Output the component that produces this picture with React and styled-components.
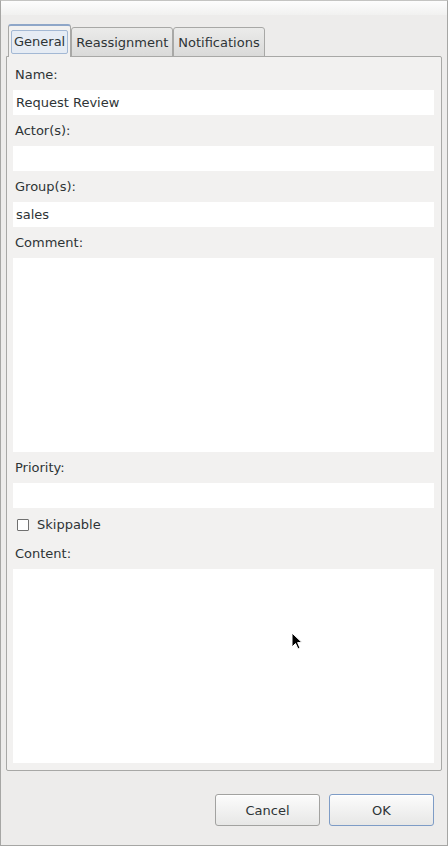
import React from 'react';
import styled, { createGlobalStyle } from 'styled-components';

const GlobalStyle = createGlobalStyle`
  html, body {
    margin: 0;
    padding: 0;
    background: #edeceb;
  }
  body {
    font-family: "DejaVu Sans", "Liberation Sans", sans-serif;
    font-size: 13px;
    color: #2e3436;
  }
  * {
    box-sizing: border-box;
  }
`;

export default function App() {
  return (
    <>
      <GlobalStyle />
      <Window>
        <TopStrip />
        <TabArea>
          <TabBar>
            <Tab selected>
              <Focus>General</Focus>
            </Tab>
            <Tab>Reassignment</Tab>
            <Tab>Notifications</Tab>
          </TabBar>
          <Panel>
            <Label>Name:</Label>
            <Field>Request Review</Field>
            <Label>Actor(s):</Label>
            <Field />
            <Label>Group(s):</Label>
            <Field>sales</Field>
            <Label>Comment:</Label>
            <TextArea />
            <Label>Priority:</Label>
            <Field />
            <CheckRow>
              <Box />
              Skippable
            </CheckRow>
            <Label short>Content:</Label>
            <TextArea />
          </Panel>
        </TabArea>
        <Footer>
          <Button>Cancel</Button>
          <Button primary>OK</Button>
        </Footer>
        <Pointer width="14" height="20" viewBox="0 0 14 20">
          <path
            d="M1 1 L1 15 L4.5 11.5 L7 17 L9 16 L6.6 10.6 L11 10.6 Z"
            fill="#000"
            stroke="#fff"
            strokeWidth="1"
            strokeLinejoin="round"
          />
        </Pointer>
      </Window>
    </>
  );
}

const Window = styled.div`
  position: relative;
  width: 448px;
  height: 846px;
  display: flex;
  flex-direction: column;
  background: #edeceb;
  border: 1px solid #a6a6a4;
  border-top: 1px solid #c4c4c2;
`;

const TopStrip = styled.div`
  height: 14px;
  background: linear-gradient(#fdfdfd, #f1f1f0);
`;

const TabArea = styled.div`
  margin: 10px 5px 0 5px;
  display: flex;
  flex-direction: column;
`;

const TabBar = styled.div`
  display: flex;
  align-items: flex-end;
  padding-left: 2px;
  height: 32px;
  position: relative;
  z-index: 1;
  margin-bottom: -1px;
`;

const Tab = styled.div`
  display: flex;
  align-items: center;
  justify-content: center;
  height: ${p => (p.selected ? '33px' : '30px')};
  padding: ${p => (p.selected ? '3px 2px 3px 2px' : '1px 4px 0 4px')};
  border: 1px solid #a8a8a6;
  border-top: ${p => (p.selected ? '2px solid #8ea6c8' : '1px solid #a8a8a6')};
  border-bottom: ${p => (p.selected ? 'none' : '1px solid #a8a8a6')};
  border-radius: 3px 3px 0 0;
  background: ${p => (p.selected ? '#f2f1f0' : 'linear-gradient(#ebebea, #dadad9)')};
  white-space: nowrap;
`;

const Focus = styled.div`
  height: 24px;
  line-height: 22px;
  padding: 0 2px;
  border: 1px solid #a3b8d4;
  border-radius: 2px;
  background: #e6ecf4;
`;

const Panel = styled.div`
  height: 715px;
  display: flex;
  flex-direction: column;
  padding: 2px 7px 6px 6px;
  background: #f2f1f0;
  border: 1px solid #a8a8a6;
  border-radius: 0 2px 2px 2px;
`;

const Label = styled.div`
  height: ${p => (p.short ? '30px' : '31px')};
  line-height: ${p => (p.short ? '30px' : '31px')};
  padding-left: 2px;
`;

const Field = styled.div`
  height: 25px;
  line-height: 25px;
  padding-left: 3px;
  background: #fff;
`;

const TextArea = styled.div`
  height: 194px;
  background: #fff;
`;

const CheckRow = styled.div`
  height: 31px;
  display: flex;
  align-items: center;
  gap: 8px;
  padding: 2px 0 0 4px;
`;

const Box = styled.span`
  width: 12px;
  height: 12px;
  border: 1px solid #707070;
  border-radius: 1px;
  background: #fff;
`;

const Footer = styled.div`
  display: flex;
  justify-content: flex-end;
  gap: 9px;
  padding: 23px 13px 0 0;
`;

const Button = styled.div`
  width: 105px;
  height: 32px;
  display: flex;
  align-items: center;
  justify-content: center;
  border: 1px solid ${p => (p.primary ? '#7e9cc6' : '#a2a2a0')};
  border-radius: 3px;
  background: linear-gradient(#fcfcfc, #e7e7e6);
  box-shadow: inset 0 1px 0 #fff;
`;

const Pointer = styled.svg`
  position: absolute;
  left: 290px;
  top: 631px;
`;
